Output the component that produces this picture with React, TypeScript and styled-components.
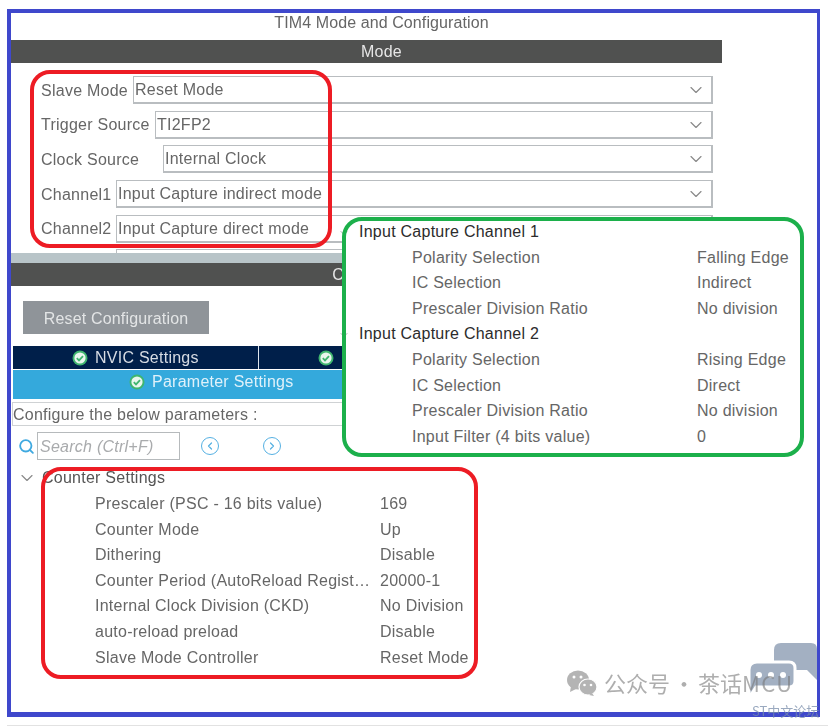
import React from "react";
import styled, { createGlobalStyle } from "styled-components";
import { ChevronDown, ChevronLeft, ChevronRight, Search } from "lucide-react";

const GlobalStyle = createGlobalStyle`
  html, body { margin: 0; padding: 0; background: #fff; }
  body { font-family: "Liberation Sans", Arial, sans-serif; overflow: hidden; }
`;

const Page = styled.div`
  width: 828px;
  height: 726px;
  position: relative;
  overflow: hidden;
  filter: blur(0.5px);
`;

const Frame = styled.div`
  box-sizing: border-box;
  margin: 9px 8px 0 7px;
  height: 708px;
  border: solid #3f48cc;
  border-width: 4px 3px 5px 4px;
`;

const FooterLine = styled.div`
  margin: 8px 0 0 7px;
  height: 1px;
  background: #e2e2e2;
`;

const Panel = styled.div`
  width: 711px;
  display: flex;
  flex-direction: column;
  color: #666;
  font-size: 16px;
  letter-spacing: 0.25px;
`;

const Title = styled.div`
  height: 27px;
  line-height: 19px;
  padding-left: 30px;
  text-align: center;
  font-size: 16px;
  letter-spacing: 0.1px;
  color: #666;
`;

const SectionBar = styled.div`
  height: 23px;
  line-height: 24px;
  padding-left: 30px;
  background: #505150;
  color: #e6e6e6;
  text-align: center;
  font-size: 16px;
`;

const ModeForm = styled.div`
  box-sizing: border-box;
  height: 190px;
  overflow: hidden;
  padding: 13px 9px 0 30px;
  display: flex;
  flex-direction: column;
  gap: 6.7px;
`;

const ModeRow = styled.div`
  display: flex;
  height: 28px;
  flex: none;
  align-items: center;
`;

const ModeLabel = styled.div<{ $width: number }>`
  width: ${(p) => p.$width}px;
  flex: none;
  padding-top: 1px;
  white-space: nowrap;
`;

const Select = styled.div`
  box-sizing: border-box;
  flex: 1;
  height: 28px;
  border: 1.5px solid #b9bdc0;
  border-right-width: 2px;
  border-bottom-width: 2px;
  padding: 1px 5px 0 1px;
  display: flex;
  align-items: center;
  justify-content: space-between;
  white-space: nowrap;
  svg { color: #8a8a8a; }
`;

const Band = styled.div`
  height: 10px;
  background: #b8c4c8;
`;

const ResetRow = styled.div`
  padding: 15px 0 12px 12px;
`;

const ResetButton = styled.div`
  width: 186px;
  height: 33px;
  line-height: 35px;
  text-align: center;
  background: #8f9499;
  color: #e3e5e6;
  letter-spacing: 0.17px;
`;

const TabRow = styled.div`
  display: flex;
  margin-left: 2px;
  height: 23px;
  line-height: 24px;
  background: #001f4a;
  color: #d6dbe3;
`;

const NavTab = styled.div<{ $width?: number; $pad: number }>`
  box-sizing: border-box;
  width: ${(p) => (p.$width ? `${p.$width}px` : "auto")};
  flex: ${(p) => (p.$width ? "none" : 1)};
  padding-left: ${(p) => p.$pad}px;
  display: flex;
  align-items: center;
  gap: 7px;
  & + & { border-left: 1px solid #dfe6ee; }
`;

const ActiveTab = styled.div`
  box-sizing: border-box;
  margin: 1px 0 0 2px;
  height: 29px;
  padding: 0 0 5px 116px;
  display: flex;
  align-items: center;
  gap: 7px;
  background: #34a9dc;
  color: #dff1fa;
`;

const HintBox = styled.div`
  box-sizing: border-box;
  margin: 3px 0 0 1px;
  height: 24px;
  line-height: 24px;
  border: 1px solid #cfd2d4;
  border-right: 0;
  white-space: nowrap;
`;

const SearchRow = styled.div`
  display: flex;
  align-items: center;
  height: 28px;
  margin-top: 6px;
  padding-left: 7px;
  svg { flex: none; }
`;

const SearchInput = styled.div`
  box-sizing: border-box;
  width: 143px;
  height: 28px;
  margin: 0 21px 0 2px;
  padding-left: 2px;
  line-height: 27px;
  border: 1.5px solid #b6babc;
  font-style: italic;
  color: #a9abad;
  white-space: nowrap;
`;

const RoundButton = styled.div`
  box-sizing: border-box;
  width: 18px;
  height: 18px;
  margin-right: 44px;
  border: 1.5px solid #55b0e2;
  border-radius: 50%;
  color: #55b0e2;
  display: flex;
  align-items: center;
  justify-content: center;
`;

const TreeHead = styled.div`
  display: flex;
  align-items: center;
  gap: 5px;
  height: 25.6px;
  margin-top: 5.5px;
  padding-left: 6px;
  color: #555;
  svg { color: #8a8a8a; }
`;

const ParamRow = styled.div<{ $labelLeft: number; $labelWidth: number }>`
  display: grid;
  grid-template-columns: ${(p) => p.$labelWidth}px auto;
  height: 25.6px;
  line-height: 25.6px;
  padding-left: ${(p) => p.$labelLeft}px;
  white-space: nowrap;
`;

const Popup = styled.div`
  position: absolute;
  left: 344px;
  top: 219px;
  width: 457px;
  height: 236px;
  background: #fff;
  color: #666;
  font-size: 16px;
  letter-spacing: 0.25px;
`;

const PopupHead = styled.div`
  position: relative;
  height: 25.7px;
  line-height: 25px;
  padding-left: 15px;
  color: #2c2c2c;
  svg {
    position: absolute;
    left: -6px;
    top: 8px;
    color: #9a9a9a;
  }
`;

const Callout = styled.div<{ $x: number; $y: number; $w: number; $h: number; $color: string }>`
  position: absolute;
  box-sizing: border-box;
  left: ${(p) => p.$x}px;
  top: ${(p) => p.$y}px;
  width: ${(p) => p.$w}px;
  height: ${(p) => p.$h}px;
  border: 4px solid ${(p) => p.$color};
  border-radius: 20px;
`;

const WeChatMark = styled.svg`
  position: absolute;
  left: 566px;
  top: 669px;
`;

const Bubbles = styled.svg`
  position: absolute;
  left: 745px;
  top: 640px;
`;

const WatermarkText = styled.div`
  position: absolute;
  left: 604px;
  top: 667px;
  font-family: "Noto Sans CJK SC", "Liberation Sans", sans-serif;
  font-size: 22px;
  line-height: 30px;
  color: rgba(120, 120, 120, 0.6);
  white-space: nowrap;
`;

const WatermarkDot = styled.span`
  margin: 0 -2px;
`;

const WatermarkLatin = styled.span`
  letter-spacing: 1.4px;
`;

const ForumText = styled.div`
  position: absolute;
  left: 752px;
  top: 701px;
  font-family: "Noto Sans CJK SC", "Liberation Sans", sans-serif;
  font-size: 13px;
  line-height: 20px;
  color: rgba(120, 140, 170, 0.75);
  white-space: nowrap;
`;

const CheckBadge = () => (
  <svg width="16" height="16" viewBox="0 0 16 16">
    <circle cx="8" cy="8" r="7.5" fill="#3fb56f" />
    <circle cx="8" cy="8" r="5.6" fill="#e9f6ee" />
    <path d="M4.8 8.2l2.2 2.2 4-4.2" fill="none" stroke="#3fb56f" strokeWidth="1.8" />
  </svg>
);

const modeRows = [
  { label: "Slave Mode", width: 92, value: "Reset Mode" },
  { label: "Trigger Source", width: 114, value: "TI2FP2" },
  { label: "Clock Source", width: 122, value: "Internal Clock" },
  { label: "Channel1", width: 75, value: "Input Capture indirect mode" },
  { label: "Channel2", width: 75, value: "Input Capture direct mode" },
  { label: "", width: 75, value: "" },
];

const counterRows = [
  ["Prescaler (PSC - 16 bits value)", "169"],
  ["Counter Mode", "Up"],
  ["Dithering", "Disable"],
  ["Counter Period (AutoReload Regist…", "20000-1"],
  ["Internal Clock Division (CKD)", "No Division"],
  ["auto-reload preload", "Disable"],
  ["Slave Mode Controller", "Reset Mode"],
];

const channels = [
  {
    name: "Input Capture Channel 1",
    rows: [
      ["Polarity Selection", "Falling Edge"],
      ["IC Selection", "Indirect"],
      ["Prescaler Division Ratio", "No division"],
    ],
  },
  {
    name: "Input Capture Channel 2",
    rows: [
      ["Polarity Selection", "Rising Edge"],
      ["IC Selection", "Direct"],
      ["Prescaler Division Ratio", "No division"],
      ["Input Filter (4 bits value)", "0"],
    ],
  },
];

export default function App() {
  return (
    <Page>
      <GlobalStyle />
      <Frame>
        <Panel>
          <Title>TIM4 Mode and Configuration</Title>
          <SectionBar>Mode</SectionBar>
          <ModeForm>
            {modeRows.map((row, i) => (
              <ModeRow key={i}>
                <ModeLabel $width={row.width}>{row.label}</ModeLabel>
                <Select>
                  {row.value}
                  <ChevronDown size={20} strokeWidth={1.4} />
                </Select>
              </ModeRow>
            ))}
          </ModeForm>
          <Band />
          <SectionBar>Configuration</SectionBar>
          <ResetRow>
            <ResetButton>Reset Configuration</ResetButton>
          </ResetRow>
          <TabRow>
            <NavTab $width={245} $pad={59}>
              <CheckBadge />
              NVIC Settings
            </NavTab>
            <NavTab $pad={59}>
              <CheckBadge />
            </NavTab>
          </TabRow>
          <ActiveTab>
            <CheckBadge />
            Parameter Settings
          </ActiveTab>
          <HintBox>Configure the below parameters :</HintBox>
          <SearchRow>
            <Search size={17} color="#3fa9e0" strokeWidth={2.6} />
            <SearchInput>Search (Ctrl+F)</SearchInput>
            <RoundButton>
              <ChevronLeft size={12} strokeWidth={2.4} />
            </RoundButton>
            <RoundButton>
              <ChevronRight size={12} strokeWidth={2.4} />
            </RoundButton>
          </SearchRow>
          <TreeHead>
            <ChevronDown size={20} strokeWidth={1.4} />
            Counter Settings
          </TreeHead>
          {counterRows.map(([label, value]) => (
            <ParamRow key={label} $labelLeft={84} $labelWidth={285}>
              <span>{label}</span>
              <span>{value}</span>
            </ParamRow>
          ))}
        </Panel>
      </Frame>
      <FooterLine />

      <Popup>
        {channels.map((channel) => (
          <div key={channel.name}>
            <PopupHead>
              <ChevronDown size={12} strokeWidth={1.6} />
              {channel.name}
            </PopupHead>
            {channel.rows.map(([label, value]) => (
              <ParamRow key={label} $labelLeft={68} $labelWidth={285}>
                <span>{label}</span>
                <span>{value}</span>
              </ParamRow>
            ))}
          </div>
        ))}
      </Popup>

      <Callout $x={30} $y={70} $w={302} $h={178} $color="#ed1c24" />
      <Callout $x={41} $y={467} $w={437} $h={212} $color="#ed1c24" />
      <Callout $x={342} $y={217} $w={462} $h={240} $color="#1cb04b" />

      <Bubbles width="75" height="60" viewBox="0 0 75 60">
        <path d="M36 3H66q6 0 6 6V40L62 30H29V10q0-7 7-7z" fill="#a3b0c2" />
        <path
          d="M12 22H44q6 0 6 6V41q0 6-6 6H11L4 58V30q0-8 8-8z"
          fill="#a3b0c2"
          stroke="#fff"
          strokeWidth="3"
        />
        <circle cx="14" cy="35" r="3" fill="#fff" />
        <circle cx="26" cy="35" r="3" fill="#fff" />
        <circle cx="38" cy="35" r="3" fill="#fff" />
      </Bubbles>
      <WeChatMark width="32" height="28" viewBox="0 0 32 28">
        <ellipse cx="12" cy="11" rx="11" ry="9.5" fill="#b4b4b4" />
        <path d="M5 17l-1 6 6-3z" fill="#b4b4b4" />
        <ellipse cx="22" cy="18" rx="9" ry="8" fill="#b4b4b4" stroke="#fff" strokeWidth="1.2" />
        <path d="M26 24l2 3-5-1z" fill="#b4b4b4" />
        <circle cx="8" cy="8" r="1.5" fill="#fff" />
        <circle cx="15" cy="8" r="1.5" fill="#fff" />
        <circle cx="18.5" cy="16" r="1.3" fill="#fff" />
        <circle cx="25" cy="16" r="1.3" fill="#fff" />
      </WeChatMark>
      <WatermarkText>
        公众号 <WatermarkDot>·</WatermarkDot> 茶话<WatermarkLatin>MCU</WatermarkLatin>
      </WatermarkText>
      <ForumText>ST中文论坛</ForumText>
    </Page>
  );
}
